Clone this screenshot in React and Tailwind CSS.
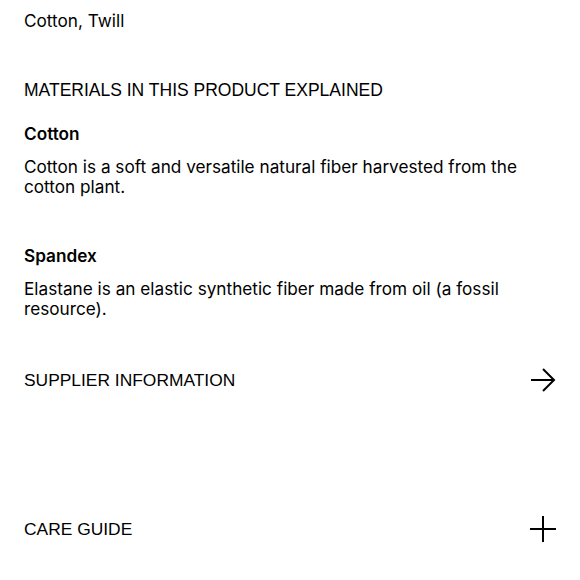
import React from 'react';

const ArrowIcon = () => (
  <svg width="26" height="26" viewBox="0 0 26 26" fill="none" stroke="black" strokeWidth="2">
    <path d="M1 13h23M13 2l11 11-11 11" />
  </svg>
);

const PlusIcon = () => (
  <svg width="26" height="26" viewBox="0 0 26 26" fill="none" stroke="black" strokeWidth="2">
    <path d="M0 13h26M13 0v26" />
  </svg>
);

const Material = ({ name, text }) => (
  <div>
    <h3 className="font-['Inter',sans-serif] text-[17.2px] font-semibold leading-5">{name}</h3>
    <p className="mt-[13px] font-['Inter',sans-serif] text-[17.2px] leading-5">{text}</p>
  </div>
);

export default function App() {
  return (
    <div className="w-[580px] h-[580px] overflow-hidden bg-white text-black px-6">
      <p className="pt-[11px] font-['Inter',sans-serif] text-[17.2px] leading-5">Cotton, Twill</p>

      <h2 className="mt-[49px] font-['Liberation_Sans',sans-serif] text-[17.5px] leading-5">MATERIALS IN THIS PRODUCT EXPLAINED</h2>

      <div className="mt-[24px] flex flex-col gap-[49px]">
        <Material name="Cotton" text="Cotton is a soft and versatile natural fiber harvested from the cotton plant." />
        <Material name="Spandex" text="Elastane is an elastic synthetic fiber made from oil (a fossil resource)." />
      </div>

      <div className="mt-[48px] flex items-center justify-between">
        <span className="font-['Liberation_Sans',sans-serif] text-[17.4px] leading-5">SUPPLIER INFORMATION</span>
        <ArrowIcon />
      </div>

      <div className="mt-[123px] flex items-center justify-between">
        <span className="font-['Liberation_Sans',sans-serif] text-[17.4px] leading-5">CARE GUIDE</span>
        <PlusIcon />
      </div>
    </div>
  );
}
